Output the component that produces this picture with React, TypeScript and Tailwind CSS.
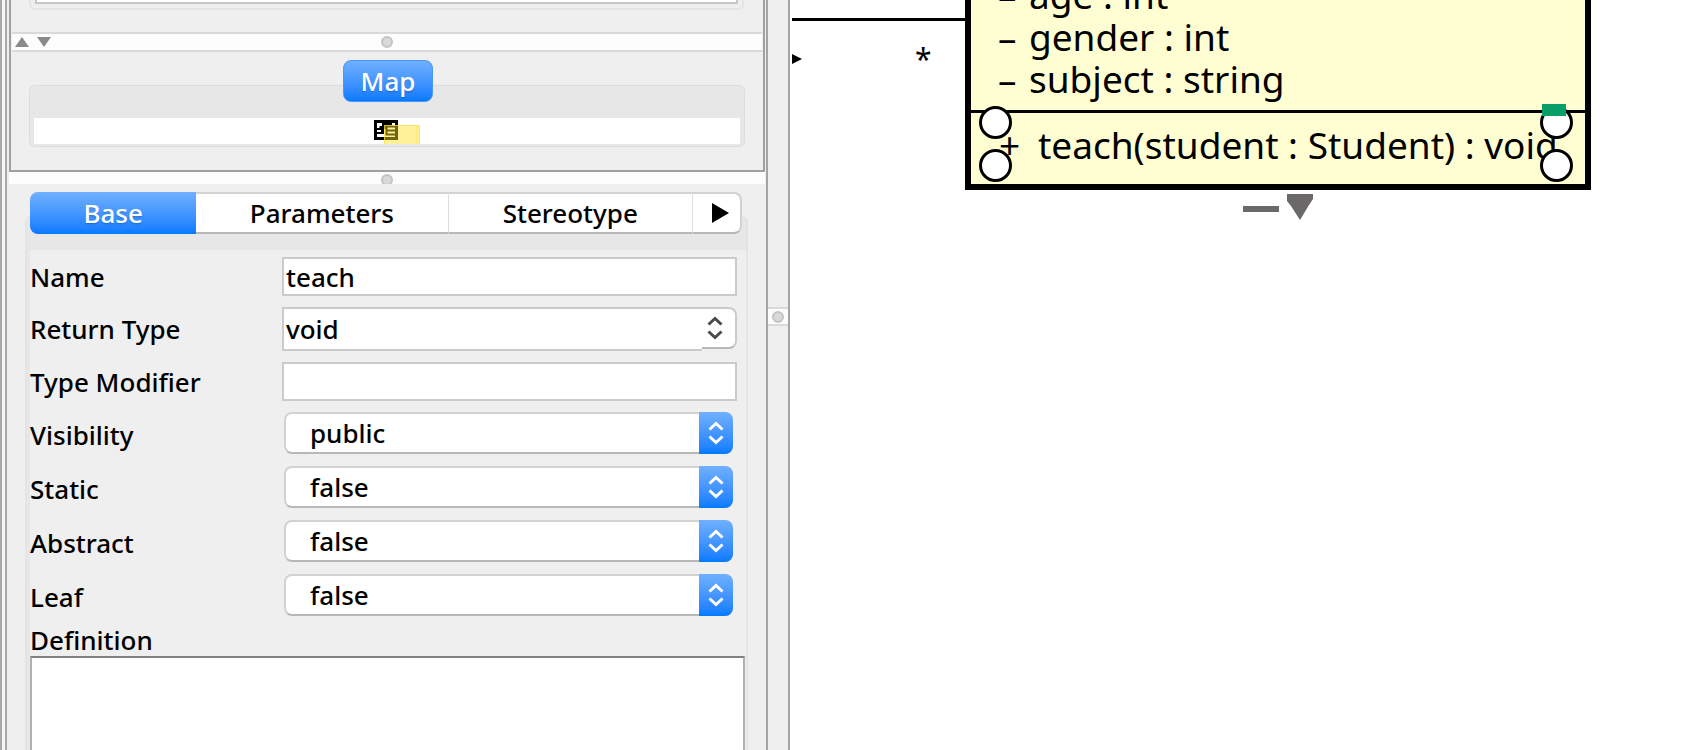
import type { ReactNode } from 'react';

const BLUE = 'bg-linear-to-b from-[#6fb0ff] to-[#007aff]';
const FIELD = 'h-[39px] w-full border-2 border-[#cbcbcb] bg-white px-[2px] outline-none';

function Knob() {
  return (
    <span className="block size-3 shrink-0 rounded-full border-2 border-[#c4c4c4] bg-[#d8d8d8]" />
  );
}

function Chevrons() {
  return (
    <svg className="w-4" viewBox="0 0 16 24" fill="none" stroke="currentColor" strokeWidth="3">
      <path d="M1.5 8.5 8 2.500l6.500 6M1.500 15.500 8 21.500l6.500-6" />
    </svg>
  );
}

function Row({ id, label, children }: { id: string; label: ReactNode; children: ReactNode }) {
  return (
    <div className="grid grid-cols-[252px_minmax(0,1fr)] items-center pr-[9px]">
      <label htmlFor={id}>{label}</label>
      {children}
    </div>
  );
}

function SelectRow({ label, value, options }: { label: string; value: string; options: string[] }) {
  const id = label.toLowerCase();
  return (
    <Row id={id} label={<span className="block pt-1">{label}</span>}>
      <div className="relative pr-1 pl-[2px]">
        <select
          id={id}
          defaultValue={value}
          className="block h-[42px] w-full appearance-none rounded-lg border-2 border-[#d2d2d2] border-b-[#b8b8b8] bg-white pl-6 outline-none"
        >
          {options.map((o) => (
            <option key={o}>{o}</option>
          ))}
        </select>
        <span
          className={`pointer-events-none absolute inset-y-0 right-1 flex w-[34px] items-center justify-center rounded-r-lg text-white ${BLUE}`}
        >
          <Chevrons />
        </span>
      </div>
    </Row>
  );
}

function MapPreview() {
  return (
    <svg className="mt-[2px] ml-5 h-6 w-[47px]" viewBox="0 0 47 24">
      <rect x="1.500" y="1.500" width="21" height="17" fill="#fff" stroke="#000" strokeWidth="3" />
      <path d="M9 1h14v2h-5v3h-5v3h-3v5H7V9H5.500V6H8V3h1z" fill="#000" />
      <path d="M2 9h5M2 13h5" stroke="#000" strokeWidth="2" />
      <path d="M12.500 6.500h9.500v8h-9.500zM12.500 10.500h9.500" fill="#fff" stroke="#000" strokeWidth="2" />
      <rect x="10" y="5" width="36" height="20" fill="#ffde1f" fillOpacity=".45" />
      <path d="M10.500 24V5.500h35V24M43 6v18" fill="none" stroke="#ffe04a" strokeOpacity=".7" />
    </svg>
  );
}

function Overview() {
  return (
    <section className="mr-px border-x-2 border-b-2 border-[#a0a0a0] bg-[#efefef]">
      <div className="mr-[19px] ml-[18px] h-[10px] rounded-b-md border-x-2 border-b-2 border-[#e4e4e4] px-[4px]">
        <div className="h-1 border-x-2 border-b-2 border-[#c6c6c6] bg-white" />
      </div>
      <div className="mx-px mt-[22px] grid h-5 grid-cols-[1fr_auto_1fr] items-center border-y-2 border-[#d9d9d9] bg-[#fdfdfd]">
        <svg className="ml-[3px] h-[10px] w-9" viewBox="0 0 36 10" fill="#8a8a8a">
          <path d="M0 10 7 0l7 10zM22 0h14l-7 10z" />
        </svg>
        <Knob />
      </div>
      <div className="relative z-10 mt-2 flex justify-center">
        <button
          type="button"
          className={`ml-[2px] h-[42px] rounded-lg border border-[#4a97f5] px-[17px] text-white text-shadow-sm ${BLUE}`}
        >
          Map
        </button>
      </div>
      <div className="-mt-[17px] mr-[18px] mb-[23px] ml-[18px] rounded-md border border-[#dcdcdc] bg-[#e7e7e7] px-[4px] pt-8 pb-[2px]">
        <div className="flex h-[26px] justify-center overflow-hidden bg-white">
          <MapPreview />
        </div>
      </div>
    </section>
  );
}

const TAB = 'flex items-center justify-center border-y-2 border-t-[#d2d2d2] border-b-[#b8b8b8] bg-white';

function Properties() {
  return (
    <section className="flex min-h-0 flex-1 flex-col">
      <div role="tablist" className="relative z-10 mt-2 mr-6 ml-[21px] grid h-[42px] grid-cols-[166fr_251fr_244fr_50fr]">
        <button type="button" role="tab" aria-selected className={`rounded-l-lg text-white text-shadow-sm ${BLUE}`}>
          Base
        </button>
        <button type="button" role="tab" className={TAB}>
          Parameters
        </button>
        <button type="button" role="tab" className={`border-l border-l-[#dedede] ${TAB}`}>
          Stereotype
        </button>
        <button
          type="button"
          aria-label="More tabs"
          className={`rounded-r-lg border-r-2 border-l border-r-[#d2d2d2] border-l-[#dedede] ${TAB}`}
        >
          <svg className="ml-2 h-5 w-[17px]" viewBox="0 0 17 20">
            <path d="M0 0 17 10 0 20z" />
          </svg>
        </button>
      </div>
      <div className="-mt-[18px] mr-[18px] ml-[16px] flex flex-1 flex-col rounded-t-md border-2 border-b-0 border-[#e4e4e4] bg-[#e7e7e7] pt-8 pl-[3px]">
        <form className="flex flex-1 flex-col bg-[#efefef] pt-[7px]">
          <div className="flex flex-col gap-[11px]">
            <Row id="name" label="Name">
              <input id="name" className={FIELD} defaultValue="teach" />
            </Row>
            <Row id="return-type" label="Return Type">
              <div className="flex items-start">
                <input
                  id="return-type"
                  className="h-[44px] min-w-0 flex-1 border-2 border-r-0 border-[#cbcbcb] bg-white px-[2px] outline-none"
                  defaultValue="void"
                />
                <button
                  type="button"
                  aria-label="Choose return type"
                  className="flex h-[42px] w-[35px] items-center justify-center rounded-r-lg border-2 border-l-0 border-[#cbcbcb] border-b-[#b8b8b8] bg-white pr-2 text-[#4a4a4a]"
                >
                  <Chevrons />
                </button>
              </div>
            </Row>
            <Row id="type-modifier" label="Type Modifier">
              <input id="type-modifier" className={FIELD} />
            </Row>
          </div>
          <div className="mt-[11px] flex flex-col gap-3">
            <SelectRow label="Visibility" value="public" options={['public', 'protected', 'package', 'private']} />
            <SelectRow label="Static" value="false" options={['false', 'true']} />
            <SelectRow label="Abstract" value="false" options={['false', 'true']} />
            <SelectRow label="Leaf" value="false" options={['false', 'true']} />
          </div>
          <div className="flex flex-1 flex-col pt-2 pr-px">
            <label htmlFor="definition">Definition</label>
            <textarea
              id="definition"
              className="min-h-24 w-full flex-1 resize-none border-2 border-b-0 border-[#b0b0b0] border-t-[#808080] bg-white p-1 outline-none"
            />
          </div>
        </form>
      </div>
    </section>
  );
}

function Handle({ className }: { className: string }) {
  return <span className={`absolute size-[33px] rounded-full border-3 border-black bg-white ${className}`} />;
}

function Diagram() {
  return (
    <main className="relative overflow-hidden bg-white font-normal">
      <svg className="absolute top-0 left-[2px] h-20 w-[174px]" viewBox="0 0 174 80">
        <path d="M0 19.500h174" stroke="#000" strokeWidth="3" />
        <path d="M0 54v10l10-5z" />
      </svg>
      <span className="absolute top-[43px] left-[125px] text-[30px] leading-8">*</span>
      <div className="absolute -top-[26px] left-[175px] w-[626px] border-6 border-t-0 border-black bg-[#fffed2] text-[37px] leading-[42px] whitespace-nowrap">
        <ul className="border-b-3 border-black pb-[10px] pl-[27px]">
          {['age : int', 'gender : int', 'subject : string'].map((a) => (
            <li key={a} className="flex">
              <span className="w-[31px]">–</span>
              {a}
            </li>
          ))}
        </ul>
        <p className="flex pt-[11px] pb-[18px] pl-[28px]">
          <span className="w-[39px]">+</span>teach(student : Student) : void
        </p>
      </div>
      <Handle className="top-[106px] left-[189px]" />
      <Handle className="top-[149px] left-[189px]" />
      <Handle className="top-[106px] left-[750px]" />
      <Handle className="top-[149px] left-[750px]" />
      <span className="absolute top-[104px] left-[752px] h-3 w-6 bg-[#0a9f69]" />
      <svg className="absolute top-[194px] left-[453px] h-[26px] w-[70px]" viewBox="0 0 70 26" fill="#6b6869">
        <path d="M0 12h36v6H0zM44 0h26v5l-4 6-9 15-9-14-4-5z" />
      </svg>
    </main>
  );
}

export default function App() {
  return (
    <div className="grid h-screen min-h-[750px] grid-cols-[79fr_91fr] overflow-hidden font-['Noto_Sans','Open_Sans',sans-serif] text-[26px] leading-8 font-medium text-black">
      <aside className="flex min-w-0 bg-[#efefef]">
        <div className="w-[7px] border-r-2 border-l-2 border-[#a8a8a8] bg-[#f6f6f6]" />
        <div className="ml-[2px] flex min-w-0 flex-1 flex-col">
          <Overview />
          <div className="mr-px flex h-3 shrink-0 justify-center overflow-hidden bg-[#fdfdfd] pt-[2px]">
            <Knob />
          </div>
          <Properties />
        </div>
        <div className="w-6 shrink-0 border-x-2 border-[#a4a4a4] bg-[#efefef] pt-[307px]">
          <div className="flex h-[19px] items-center justify-center border-y-2 border-[#d9d9d9] bg-[#fdfdfd]">
            <Knob />
          </div>
        </div>
      </aside>
      <Diagram />
    </div>
  );
}
